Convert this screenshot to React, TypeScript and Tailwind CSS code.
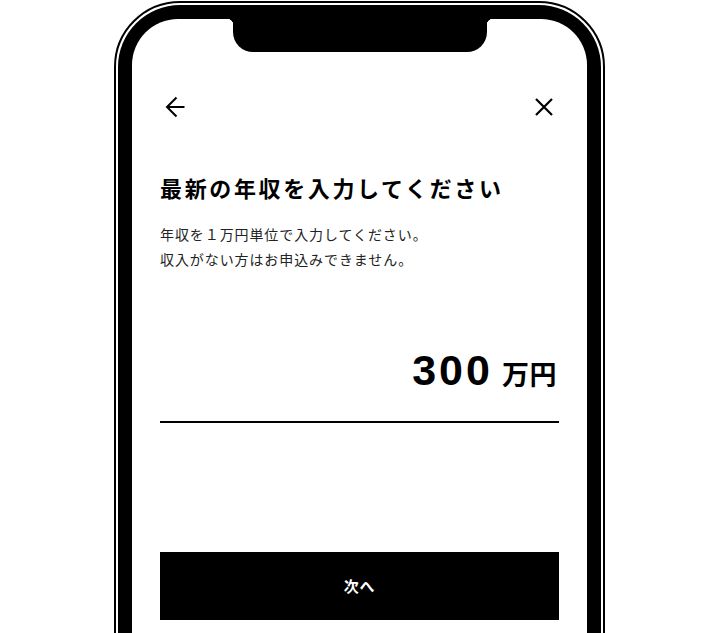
import React from "react";

export default function App() {
  const jp = { fontFamily: '"Noto Sans CJK JP", "Noto Sans", sans-serif' };
  return (
    <div className="w-[720px] h-[633px] overflow-hidden bg-white">
      <div className="ml-[114px] mt-px w-[491px] h-[900px] border-2 border-black rounded-[66px] p-[2px]">
        <div className="h-full bg-black rounded-[62px] p-[14px]">
          <div className="relative h-full bg-white rounded-[46px] overflow-hidden px-[28px]" style={jp}>
            <div className="absolute top-0 left-1/2 -translate-x-1/2 w-[254px] h-[33px] bg-black rounded-b-[20px]" />
            <div className="absolute top-0 left-[95px] w-[6px] h-[6px] bg-[radial-gradient(circle_at_0_100%,transparent_6px,black_6.5px)]" />
            <div className="absolute top-0 right-[94px] w-[6px] h-[6px] bg-[radial-gradient(circle_at_100%_100%,transparent_6px,black_6.5px)]" />

            <div className="pt-[76px] h-[100px] flex items-center justify-between">
              <svg className="ml-[5px]" width="20" height="22" viewBox="0 0 20 22" fill="none" stroke="black" strokeWidth="2">
                <path d="M19.5 11H2" />
                <path d="M11.5 1.5L2 11l9.5 9.5" />
              </svg>
              <svg className="mr-[6px]" width="18" height="18" viewBox="0 0 18 18" fill="none" stroke="black" strokeWidth="2.2">
                <path d="M1 1l16 16M17 1L1 17" />
              </svg>
            </div>

            <h1 className="mt-[52px] text-[22px] leading-[32px] font-bold tracking-[0.12em] text-black">
              最新の年収を入力してください
            </h1>
            <p className="mt-[19px] text-[14px] leading-[25px] tracking-[0.065em] text-[#222]">
              年収を１万円単位で入力してください。
              <br />
              収入がない方はお申込みできません。
            </p>

            <div className="mt-[78px] flex justify-end items-baseline pr-[2px]">
              <span
                className="text-[43px] leading-[40px] font-bold tracking-[0.07em] text-black"
                style={{ fontFamily: '"Liberation Sans", Arial, sans-serif' }}
              >
                300
              </span>
              <span className="ml-[9px] text-[27px] leading-[40px] font-bold tracking-[0.02em] text-black">
                万円
              </span>
            </div>
            <div className="mt-[27px] h-[2px] bg-black" />

            <button className="mt-[129px] w-full h-[68px] bg-black text-white text-[15px] font-bold tracking-[0.05em] flex items-center justify-center">
              次へ
            </button>
          </div>
        </div>
      </div>
    </div>
  );
}
